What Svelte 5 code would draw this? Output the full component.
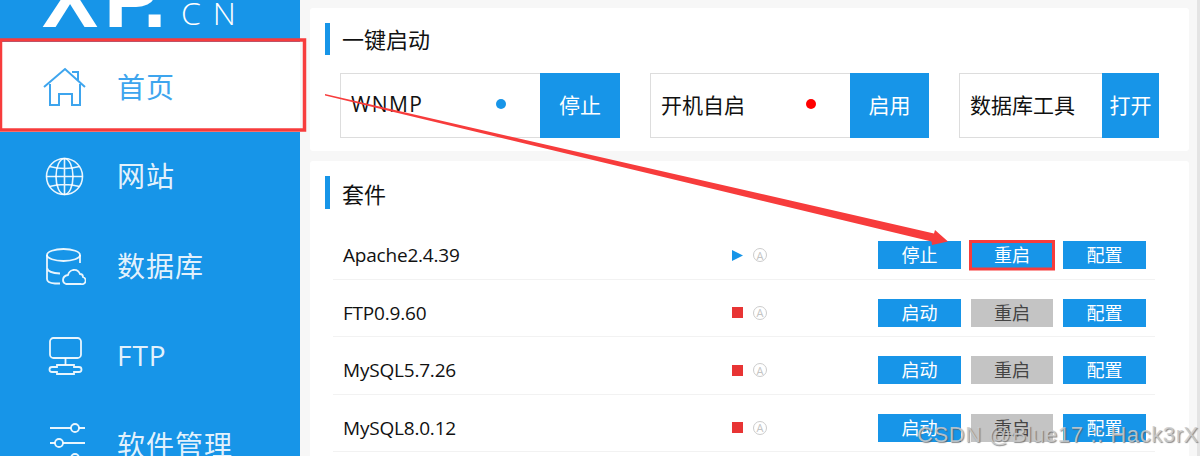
<script>
	const rows = [
		{ name: 'Apache2.4.39', running: true },
		{ name: 'FTP0.9.60', running: false },
		{ name: 'MySQL5.7.26', running: false },
		{ name: 'MySQL8.0.12', running: false },
	];
	const quick = [
		{ label: 'WNMP', dot: '#1795e8', action: '停止', cls: 'q1' },
		{ label: '开机自启', dot: '#ff0000', action: '启用', cls: 'q2' },
		{ label: '数据库工具', dot: null, action: '打开', cls: 'q3' },
	];
</script>

<div class="page">
	<aside class="sidebar">
		<div class="logo">
			<span class="xp"><b class="x">X</b><b class="p">P</b><b>.</b></span>
			<span class="cn">CN</span>
		</div>
		<nav>
			<div class="item active">
				<svg viewBox="0 0 44 44" width="44" height="44" fill="none" stroke="currentColor" stroke-width="2">
					<path d="M2 22 23 4 43 22" />
					<path d="M30 7h6v8" />
					<path d="M8 19v21h9V29h13v11h8V19" />
				</svg>
				<span>首页</span>
			</div>
			<div class="item">
				<svg viewBox="0 0 44 44" width="44" height="44" fill="none" stroke="currentColor" stroke-width="1.6">
					<circle cx="22.5" cy="22.5" r="18" />
					<ellipse cx="22.5" cy="22.5" rx="8.5" ry="18" />
					<path d="M22.5 4.5v36M4.5 22.5h36M7.5 12.5q15 4 30 0M7.5 32.5q15-4 30 0" />
				</svg>
				<span>网站</span>
			</div>
			<div class="item">
				<svg viewBox="0 0 44 44" width="44" height="44" fill="none" stroke="currentColor" stroke-width="1.8">
					<ellipse cx="21.5" cy="11" rx="16.5" ry="6" />
					<path d="M5 11v24q0 4 8 4.500h5M5 24q1 5 13 5.500M38 11v8" />
					<path d="M24 40h15a3.500 3.500 0 0 0 2-7q0-3-3-3-2-5-7-4-4 1-5 5-5 1-5 5 0 3 3 4z" />
				</svg>
				<span>数据库</span>
			</div>
			<div class="item">
				<svg viewBox="0 0 44 44" width="44" height="44" fill="none" stroke="currentColor" stroke-width="1.8">
					<rect x="8" y="4" width="31" height="20" rx="3.500" />
					<path d="M23.500 24v7" />
					<path d="M15 31h17v2h5a2.500 2.500 0 0 1 0 5h-5v2H15v-2h-5a2.500 2.500 0 0 1 0-5h5z" />
				</svg>
				<span>FTP</span>
			</div>
			<div class="item">
				<svg viewBox="0 0 44 44" width="44" height="44" fill="none" stroke="currentColor" stroke-width="1.8">
					<path d="M8 5h21M37 5h6M8 20h5M21 20h22M8 35h21M37 35h6" />
					<circle cx="33" cy="5" r="4" />
					<circle cx="17" cy="20" r="4" />
					<circle cx="33" cy="35" r="4" />
				</svg>
				<span>软件管理</span>
			</div>
		</nav>
	</aside>

	<main>
		<section class="card top">
			<h2>一键启动</h2>
			<div class="quick">
				{#each quick as q}
					<div class="group {q.cls}">
						<div class="field">
							<span>{q.label}</span>
							{#if q.dot}<i class="dot" style="background:{q.dot}"></i>{/if}
						</div>
						<button>{q.action}</button>
					</div>
				{/each}
			</div>
		</section>

		<section class="card suite">
			<h2>套件</h2>
			<div class="rows">
				{#each rows as row}
					<div class="row">
						<span class="name">{row.name}</span>
						<span class="state">
							{#if row.running}
								<svg viewBox="0 0 11 11" width="11" height="11"><path d="M0 0l11 5.500L0 11z" fill="#1795e8" /></svg>
							{:else}
								<svg viewBox="0 0 11 11" width="11" height="11"><rect width="11" height="11" fill="#e83434" /></svg>
							{/if}
						</span>
						<span class="auto">A</span>
						<div class="actions">
							<button>{row.running ? '停止' : '启动'}</button>
							<button class:off={!row.running}>重启</button>
							<button>配置</button>
						</div>
					</div>
				{/each}
			</div>
		</section>
	</main>

	<svg class="marks" viewBox="0 0 1200 456" width="1200" height="456">
		<rect x="0.500" y="40" width="304" height="90" fill="none" stroke="#f73c3c" stroke-width="3.500" />
		<rect x="970.500" y="241.500" width="83" height="27.500" fill="none" stroke="#f73c3c" stroke-width="3" />
		<path d="M325 94 934 233.500 935 230 948 241.500 932 245 931.500 241.500 325 95.500Z" fill="#f73c3c" />
	</svg>
	<div class="watermark">CSDN @Blue17 :: Hack3rX</div>
</div>

<style>
	:global(body) {
		margin: 0;
		background: #f7f7f7;
	}

	.page {
		position: relative;
		display: flex;
		width: 1200px;
		height: 456px;
		overflow: hidden;
		font-family: "Open Sans", "Noto Sans CJK SC", sans-serif;
		color: #111;
	}

	.sidebar {
		flex: 0 0 300px;
		background: #1795e8;
		color: #fff;
	}

	.logo {
		display: flex;
		align-items: flex-start;
		height: 42px;
		padding-left: 42px;
		overflow: hidden;
		box-sizing: border-box;
	}
	.xp {
		font-family: "Liberation Sans", sans-serif;
		font-size: 84px;
		line-height: 26px;
		margin-top: -15px;
		width: 139px;
		flex: none;
		white-space: nowrap;
	}
	.xp b {
		font-weight: 700;
	}
	.x {
		letter-spacing: 6px;
	}
	.p {
		letter-spacing: -17px;
	}
	.cn {
		font-weight: 300;
		font-size: 32px;
		line-height: 26px;
		letter-spacing: 12px;
		white-space: nowrap;
	}

	.item {
		display: flex;
		align-items: center;
		gap: 31px;
		height: 89.600px;
		padding-left: 42px;
		font-size: 28px;
		color: rgba(255, 255, 255, 0.9);
	}
	.item svg {
		flex: none;
	}
	.item span {
		letter-spacing: 1px;
		margin-bottom: 2px;
	}
	.item.active {
		background: #fff;
		color: #3ea5ee;
	}

	main {
		flex: 1;
		padding: 8px 11px 0 10px;
		box-sizing: border-box;
		border-right: 3px solid #e4e4e4;
		min-width: 0;
	}

	.card {
		background: #fff;
		border-radius: 3px;
		margin-right: -3px;
	}
	.card.top {
		height: 143px;
		padding: 15px 0 0 15px;
		box-sizing: border-box;
		margin-bottom: 10px;
	}
	.card.suite {
		padding: 15px 0 0 15px;
		height: 300px;
		box-sizing: border-box;
	}

	h2 {
		margin: 0;
		border-left: 5px solid #1795e8;
		padding-left: 12px;
		height: 32px;
		line-height: 33px;
		font-size: 22px;
		font-weight: 400;
	}
	.suite h2 {
		height: 33px;
		line-height: 36px;
	}

	.quick {
		display: flex;
		margin: 18px 0 0 15px;
	}
	.group {
		display: flex;
		height: 65px;
	}
	.field {
		display: flex;
		align-items: center;
		justify-content: space-between;
		box-sizing: border-box;
		border: 1px solid #ddd;
		border-right: 0;
		padding: 0 0 3px 10px;
		font-size: 21px;
	}
	.q1 .field span {
		letter-spacing: 1.400px;
	}
	.dot {
		width: 10px;
		height: 10px;
		border-radius: 50%;
		margin: -1px 34px 0 0;
	}
	.quick button {
		font-size: 21px;
		padding-bottom: 4px;
	}
	.q1 .field, .q2 .field {
		width: 200px;
	}
	.q1 button {
		width: 80px;
	}
	.q1 {
		margin-right: 30px;
	}
	.q2 button {
		width: 79px;
	}
	.q2 {
		margin-right: 30px;
	}
	.q3 .field {
		width: 143px;
	}
	.q3 button {
		width: 57px;
	}

	button {
		display: block;
		border: 0;
		padding: 0;
		margin: 0;
		background: #1795e8;
		color: #fff;
		font-family: inherit;
		white-space: nowrap;
	}

	.rows {
		margin: 13px 34px 0 8px;
	}
	.row {
		display: flex;
		box-sizing: border-box;
		height: 57.500px;
		padding: 19px 9px 0 10px;
		border-bottom: 1px solid #f2f2f2;
	}
	.name {
		width: 389px;
		flex: none;
		font-size: 19px;
		letter-spacing: -0.2px;
		line-height: 28px;
	}
	.state {
		display: flex;
		align-items: center;
		width: 21px;
		height: 28px;
		flex: none;
	}
	.auto {
		flex: none;
		display: flex;
		align-items: center;
		justify-content: center;
		box-sizing: border-box;
		width: 14px;
		height: 14px;
		margin-top: 7px;
		border: 1px solid #ccc;
		border-radius: 50%;
		font-size: 11px;
		line-height: 1;
		color: #c4c4c4;
	}
	.actions {
		display: flex;
		gap: 10px;
		margin-left: auto;
	}
	.actions button {
		width: 83px;
		height: 28px;
		font-size: 18px;
		line-height: 28px;
	}
	.actions button:nth-child(2) {
		width: 82px;
	}
	.actions button.off {
		background: #c4c4c4;
		color: #444;
	}

	.marks {
		position: absolute;
		left: 0;
		top: 0;
		pointer-events: none;
	}

	.watermark {
		position: absolute;
		left: 917px;
		top: 422px;
		font-family: "Liberation Sans", sans-serif;
		font-size: 22px;
		letter-spacing: 0.6px;
		white-space: nowrap;
		color: rgba(205, 205, 205, 0.85);
		text-shadow: 1px 1px 1px rgba(90, 90, 90, 0.7);
	}
</style>
